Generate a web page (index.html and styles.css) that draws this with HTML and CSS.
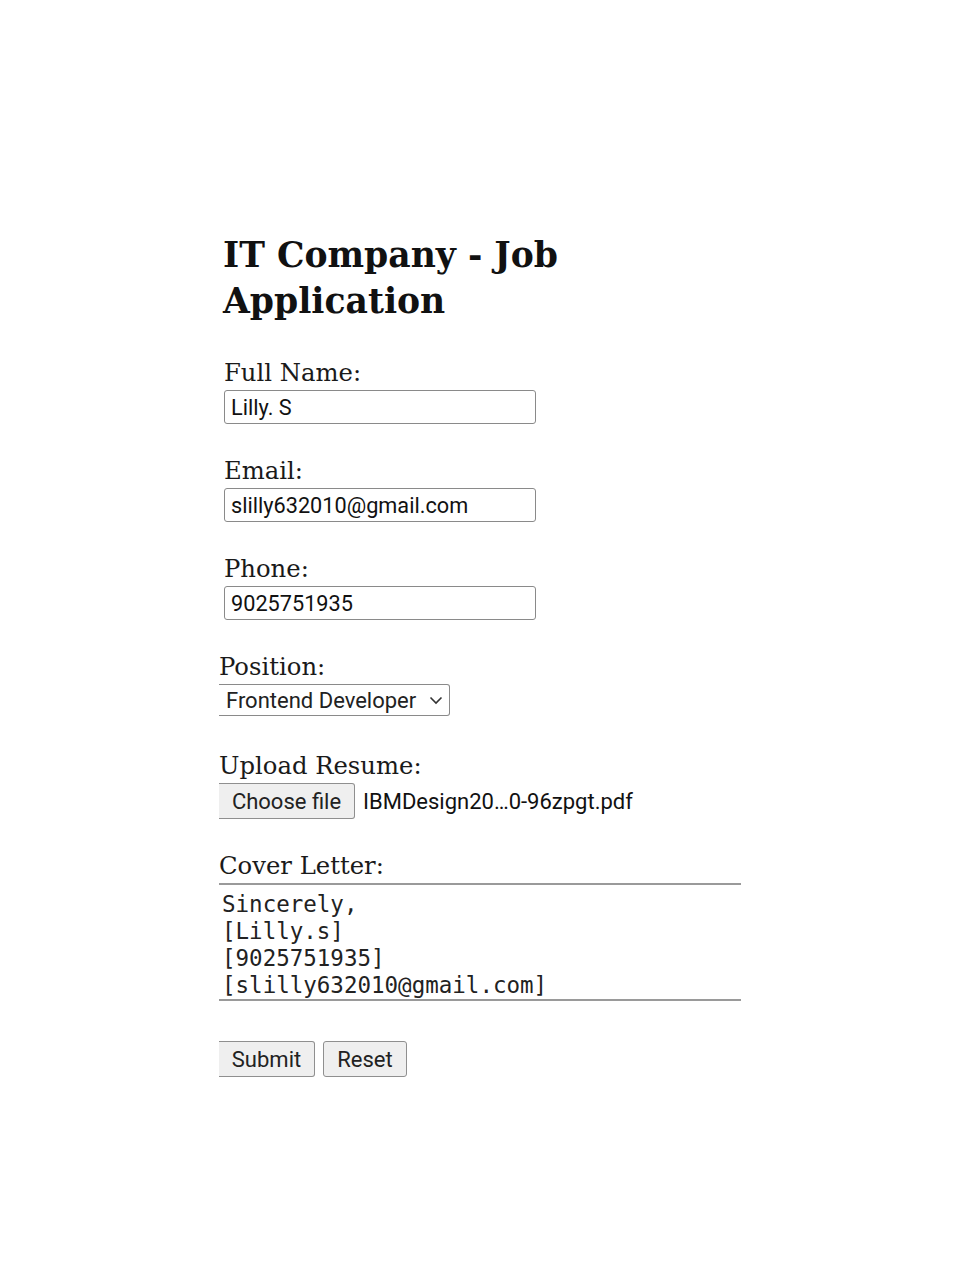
FILE: index.html
```html
<!DOCTYPE html>
<html lang="en">
<head>
<meta charset="utf-8">
<title>IT Company - Job Application</title>
<link rel="stylesheet" href="styles.css">
</head>
<body>
<main class="page">
  <form class="form">
    <h1 class="title">IT Company - Job Application</h1>

    <div class="field indent">
      <label class="label" for="name">Full Name:</label>
      <input class="text-input" id="name" type="text" value="Lilly. S">
    </div>

    <div class="field indent">
      <label class="label" for="email">Email:</label>
      <input class="text-input" id="email" type="text" value="slilly632010@gmail.com">
    </div>

    <div class="field indent">
      <label class="label" for="phone">Phone:</label>
      <input class="text-input" id="phone" type="text" value="9025751935">
    </div>

    <div class="field field-select">
      <label class="label" for="position">Position:</label>
      <div class="select">
        <span class="select-text">Frontend Developer</span>
        <svg class="chev" width="14" height="9" viewBox="0 0 14 9"><path d="M1.5 1.5 L7 7 L12.5 1.5" fill="none" stroke="#333" stroke-width="1.6"/></svg>
      </div>
    </div>

    <div class="field">
      <label class="label">Upload Resume:</label>
      <div class="file-row">
        <span class="btn file-btn">Choose file</span>
        <span class="file-name">IBMDesign20…0-96zpgt.pdf</span>
      </div>
    </div>

    <div class="field">
      <label class="label" for="cover">Cover Letter:</label>
      <div class="textarea">Sincerely,
[Lilly.s]
[9025751935]
[slilly632010@gmail.com]</div>
    </div>

    <div class="actions">
      <span class="btn">Submit</span>
      <span class="btn">Reset</span>
    </div>
  </form>
</main>
</body>
</html>
```
FILE: styles.css
```css
html, body {
  margin: 0;
  padding: 0;
  background: #ffffff;
}
.page {
  width: 960px;
  display: flex;
  justify-content: center;
  padding-top: 232px;
}
.form {
  width: 522px;
  display: flex;
  flex-direction: column;
  font-family: "DejaVu Serif", "Liberation Serif", serif;
  color: #111;
}
.indent {
  margin-left: 5px;
}
.title {
  margin: 0 0 32px 4px;
  font-size: 34.6px;
  line-height: 46px;
  font-weight: bold;
  width: 420px;
}
.field {
  display: flex;
  flex-direction: column;
  align-items: flex-start;
  margin-bottom: 30px;
}
.field-select {
  margin-bottom: 33px;
}
.label {
  font-size: 24.3px;
  line-height: 34px;
  color: #1a1a1a;
}
.text-input {
  box-sizing: border-box;
  width: 312px;
  height: 34px;
  margin: 0;
  padding: 0 6px;
  border: 1.5px solid #8a8a8a;
  border-radius: 3px;
  font-family: Roboto, "Liberation Sans", sans-serif;
  font-size: 21.7px;
  color: #111;
  background: #fff;
}
.select {
  box-sizing: border-box;
  height: 32px;
  width: 231px;
  display: flex;
  align-items: center;
  justify-content: space-between;
  padding: 0 6px 0 7px;
  border: 1.5px solid #8a8a8a;
  border-left: none;
  border-radius: 0 3px 3px 0;
  font-family: Roboto, "Liberation Sans", sans-serif;
  font-size: 22px;
  color: #222;
}
.file-row {
  display: flex;
  align-items: center;
  gap: 8px;
}
.btn {
  box-sizing: border-box;
  display: inline-flex;
  align-items: center;
  justify-content: center;
  height: 36px;
  padding: 0 8px;
  background: #efefef;
  border: 1.5px solid #8f8f8f;
  border-left: none;
  border-radius: 0 3px 3px 0;
  font-family: Roboto, "Liberation Sans", sans-serif;
  font-size: 22px;
  color: #222;
}
.file-btn {
  width: 136px;
}
.file-name {
  font-family: Roboto, "Liberation Sans", sans-serif;
  font-size: 22px;
  color: #111;
}
.textarea {
  box-sizing: border-box;
  width: 522px;
  height: 118px;
  padding: 6px 4px 0 3px;
  border-top: 2px solid #9a9a9a;
  border-bottom: 2px solid #9a9a9a;
  white-space: pre;
  font-family: "DejaVu Sans Mono", "Liberation Mono", monospace;
  font-size: 22.5px;
  line-height: 27px;
  color: #222;
}
.actions {
  display: flex;
  gap: 8px;
  margin-top: 10px;
}
.actions .btn:first-child {
  width: 96px;
}
.actions .btn:last-child {
  width: 84px;
  border-left: 1.5px solid #8f8f8f;
  border-radius: 3px;
}
```
